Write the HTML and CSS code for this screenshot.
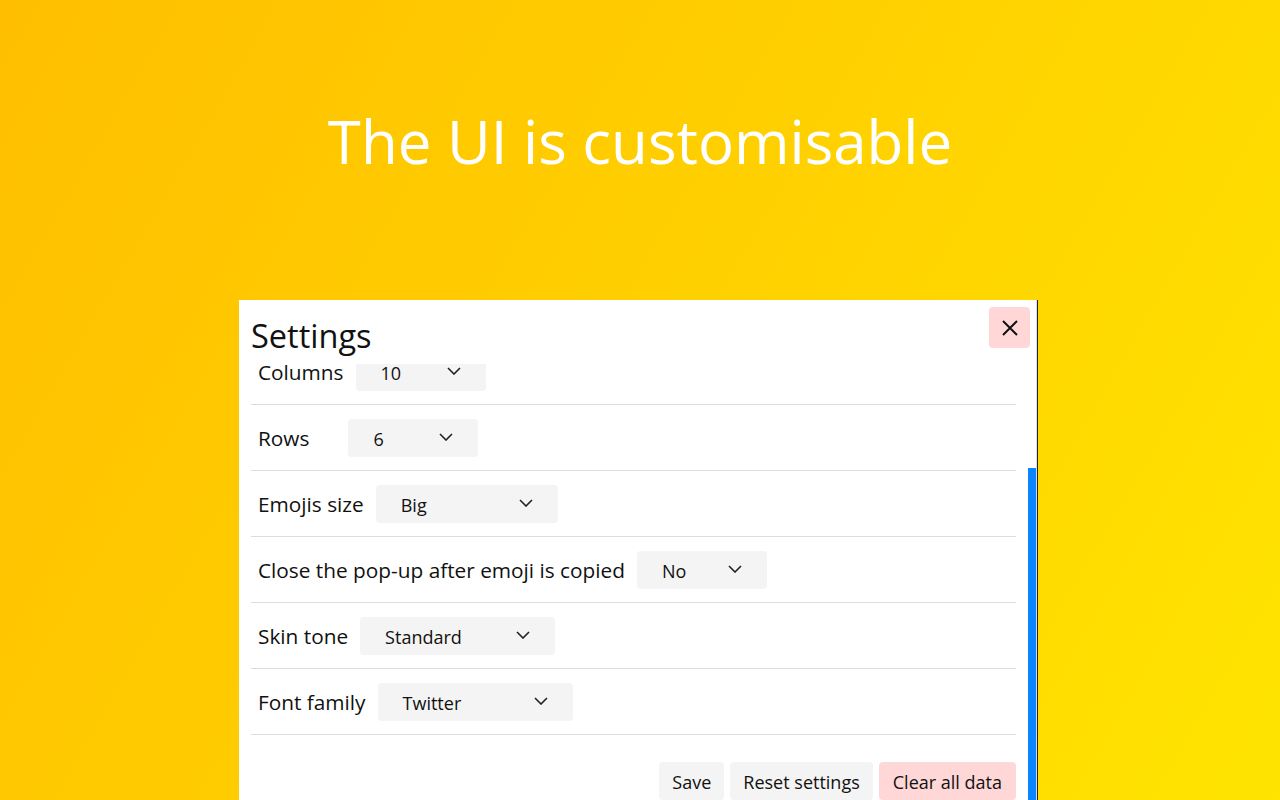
FILE: index.html
```html
<!DOCTYPE html>
<html lang="en">
<head>
<meta charset="utf-8">
<title>The UI is customisable</title>
<link rel="stylesheet" href="styles.css">
</head>
<body>
<header class="hero">
  <h1 class="hero-title">The UI is customisable</h1>
</header>
<section class="panel">
  <div class="panel-head">
    <h2 class="panel-title">Settings</h2>
    <button class="close-btn" aria-label="Close">
      <svg width="18" height="18" viewBox="0 0 18 18"><path d="M2 2 L16 16 M16 2 L2 16" stroke="#111" stroke-width="2" fill="none"/></svg>
    </button>
  </div>
  <div class="scroll">
    <div class="list">
      <div class="row">
        <span class="label">Columns</span>
        <div class="select w130"><span>10</span><svg class="chev" width="14" height="8" viewBox="0 0 14 8"><path d="M1 1 L7 7 L13 1" stroke="#222" stroke-width="1.6" fill="none"/></svg></div>
      </div>
      <div class="row">
        <span class="label label-rows">Rows</span>
        <div class="select w130"><span>6</span><svg class="chev" width="14" height="8" viewBox="0 0 14 8"><path d="M1 1 L7 7 L13 1" stroke="#222" stroke-width="1.6" fill="none"/></svg></div>
      </div>
      <div class="row">
        <span class="label">Emojis size</span>
        <div class="select w182"><span>Big</span><svg class="chev" width="14" height="8" viewBox="0 0 14 8"><path d="M1 1 L7 7 L13 1" stroke="#222" stroke-width="1.6" fill="none"/></svg></div>
      </div>
      <div class="row">
        <span class="label">Close the pop-up after emoji is copied</span>
        <div class="select w130"><span>No</span><svg class="chev" width="14" height="8" viewBox="0 0 14 8"><path d="M1 1 L7 7 L13 1" stroke="#222" stroke-width="1.6" fill="none"/></svg></div>
      </div>
      <div class="row">
        <span class="label">Skin tone</span>
        <div class="select w195"><span>Standard</span><svg class="chev" width="14" height="8" viewBox="0 0 14 8"><path d="M1 1 L7 7 L13 1" stroke="#222" stroke-width="1.6" fill="none"/></svg></div>
      </div>
      <div class="row">
        <span class="label">Font family</span>
        <div class="select w195"><span>Twitter</span><svg class="chev" width="14" height="8" viewBox="0 0 14 8"><path d="M1 1 L7 7 L13 1" stroke="#222" stroke-width="1.6" fill="none"/></svg></div>
      </div>
    </div>
    <div class="actions">
      <button class="btn">Save</button>
      <button class="btn">Reset settings</button>
      <button class="btn btn-danger">Clear all data</button>
    </div>
  </div>
  <div class="scroll-thumb"></div>
</section>
</body>
</html>
```
FILE: styles.css
```css
* { box-sizing: border-box; }
html, body { margin: 0; height: 800px; overflow: hidden; }
body {
  font-family: "Open Sans", "Noto Sans", sans-serif;
  background: linear-gradient(120deg, #ffbf00 0%, #ffd000 50%, #ffe400 100%);
  color: #111;
}
.hero {
  height: 300px;
  padding-top: 101px;
  text-align: center;
}
.hero-title {
  margin: 0;
  font-weight: 400;
  font-size: 60px;
  line-height: 1.362;
  color: #fff;
}
.panel {
  position: relative;
  margin-left: 239px;
  width: 799px;
  height: 520px;
  background: #fff;
  border-right: 1px solid #23233a;
  box-shadow: inset -1px 0 0 #dcdcdc;
}
.panel-head {
  height: 64px;
  padding: 15px 7px 0 12px;
  display: flex;
  justify-content: space-between;
  align-items: flex-start;
}
.panel-title {
  margin: 0;
  font-weight: 400;
  font-size: 32.5px;
  line-height: 1.3;
}
.close-btn {
  width: 41px;
  height: 41px;
  margin-top: -8px;
  border: 0;
  border-radius: 4px;
  background: #ffd7d7;
  display: flex;
  align-items: center;
  justify-content: center;
  padding: 0;
}
.scroll {
  height: 456px;
  overflow: hidden;
  padding: 0 21px 0 12px;
}
.list { margin-top: -25px; }
.row {
  height: 66px;
  display: flex;
  align-items: center;
  padding-left: 7px;
  border-bottom: 1px solid #dddddd;
  gap: 12px;
}
.label { font-size: 20.8px; line-height: 1.362; padding-top: 2px; }
.label-rows { margin-right: 27px; }
.select {
  height: 38px;
  background: #f4f4f4;
  border-radius: 4px;
  display: flex;
  align-items: center;
  justify-content: space-between;
  padding: 3px 25px 0 25px;
  font-size: 18px;
}
.select .chev { margin-top: -4px; }
.w130 { width: 130px; }
.w182 { width: 182px; }
.w195 { width: 195px; }
.actions {
  display: flex;
  justify-content: flex-end;
  gap: 6px;
  margin-top: 27px;
}
.btn {
  font-family: inherit;
  font-size: 18px;
  color: #111;
  height: 38px;
  padding: 1px 13px 0;
  border: 0;
  border-radius: 4px;
  background: #f4f4f4;
}
.btn-danger { background: #ffd7d7; padding: 1px 14px 0; }
.scroll-thumb {
  position: absolute;
  right: 1px;
  top: 168px;
  width: 8px;
  bottom: 0;
  background: #0a84ff;
}
```
